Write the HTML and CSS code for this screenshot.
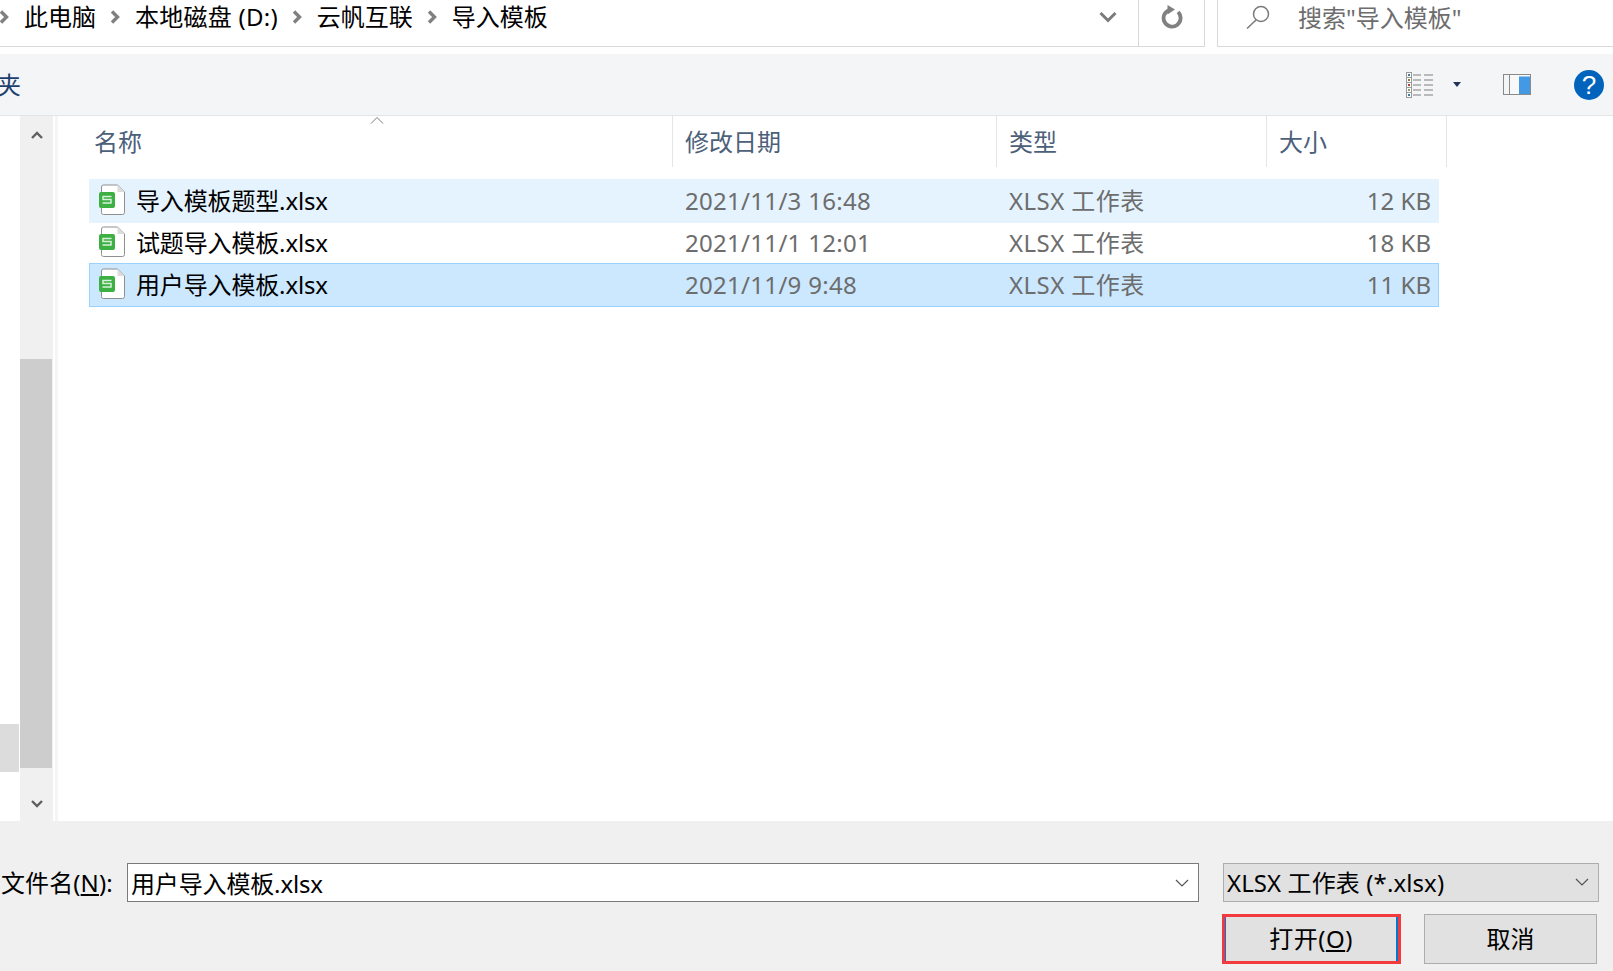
FILE: index.html
```html
<!DOCTYPE html>
<html lang="zh-CN">
<head>
<meta charset="utf-8">
<title>打开</title>
<link rel="stylesheet" href="styles.css">
</head>
<body>
<div class="window">
  <header class="topbar">
    <div class="crumbs">
      <svg class="chev chev-first" viewBox="0 0 10 14"><path d="M2 1.500 7.500 7 2 12.500"/></svg>
      <span>此电脑</span>
      <svg class="chev" viewBox="0 0 10 14"><path d="M2 1.500 7.500 7 2 12.500"/></svg>
      <span class="crumb-drive">本地磁盘 (D:)</span>
      <svg class="chev" viewBox="0 0 10 14"><path d="M2 1.500 7.500 7 2 12.500"/></svg>
      <span>云帆互联</span>
      <svg class="chev" viewBox="0 0 10 14"><path d="M2 1.500 7.500 7 2 12.500"/></svg>
      <span>导入模板</span>
      <svg class="crumb-drop" viewBox="0 0 18 12"><path d="M1.500 2 9 9.500 16.500 2"/></svg>
    </div>
    <div class="refresh">
      <svg viewBox="0 0 22 24"><path class="refresh-arc" d="M8.500 5a8.500 8.500 0 1 0 8.500 2"/><path class="refresh-head" d="M6.500 0 14 4.500 6.500 9.500z"/></svg>
    </div>
    <div class="search">
      <svg class="search-icon" viewBox="0 0 24 24"><circle cx="15" cy="9" r="7.500"/><path d="M10 15 1 23.500"/></svg>
      <span>搜索"导入模板"</span>
    </div>
  </header>

  <div class="toolbar">
    <span class="folder-label">夹</span>
    <svg class="view-icon" viewBox="0 0 27 26">
      <rect x="0.500" y="0.500" width="5" height="25" fill="#fff" stroke="#9a9a9a"/>
      <path d="M0 5.500h6M0 10.500h6M0 15.500h6M0 20.500h6" stroke="#9a9a9a"/>
      <rect x="2" y="2" width="2" height="2" fill="#3f7d9e"/>
      <rect x="2" y="7" width="2" height="2" fill="#8a7a3a"/>
      <rect x="2" y="12" width="2" height="2" fill="#c0392b"/>
      <rect x="2" y="17" width="2" height="2" fill="#8aa060"/>
      <rect x="2" y="22" width="2" height="2" fill="#3f7d9e"/>
      <path d="M7 3h8M18 3h9M7 8h8M18 8h9M7 13h8M18 13h9M7 18h8M18 18h9M7 23h8M18 23h9" stroke="#808080" stroke-width="1.200"/>
    </svg>
    <svg class="view-drop" viewBox="0 0 8 5"><path d="M0 0h8L4 5z"/></svg>
    <svg class="pane-icon" viewBox="0 0 28 21">
      <rect x="0.500" y="0.500" width="27" height="20" fill="#f8f8f8" stroke="#8a8a8a"/>
      <rect x="1" y="1" width="5.500" height="19" fill="#f4f5f7"/>
      <path d="M6.500 1v19" stroke="#8a8a8a"/>
      <rect x="16" y="2.500" width="11" height="17.500" fill="#4499e4"/>
      <path d="M22 1.500h1M24 1.500h1M26 1.500h1" stroke="#fff"/>
    </svg>
    <span class="help">?</span>
  </div>

  <main class="middle">
    <div class="nav"><div class="nav-selected"></div></div>
    <div class="scrollbar">
      <div class="scroll-btn scroll-up"><svg viewBox="0 0 12 8"><path d="M1 7 6 2l5 5"/></svg></div>
      <div class="scroll-track"><div class="scroll-thumb"></div></div>
      <div class="scroll-btn scroll-down"><svg viewBox="0 0 12 8"><path d="M1 1l5 5 5-5"/></svg></div>
    </div>
    <div class="gutter"></div>
    <section class="list">
      <svg class="sort-arrow" viewBox="0 0 14 8"><path d="M1 7.500 7 1.500l6 6"/></svg>
      <div class="list-head">
        <div class="head-cell head-name">名称</div>
        <div class="head-cell">修改日期</div>
        <div class="head-cell">类型</div>
        <div class="head-cell">大小</div>
      </div>
      <div class="rows">
        <div class="row row-hover">
          <div class="cell-name">
            <svg class="file-icon" viewBox="0 0 26 31"><path class="page" d="M2.500 3a2 2 0 0 1 2-2h14l7 7v20.500a2 2 0 0 1-2 2h-19a2 2 0 0 1-2-2z"/><path class="fold" d="M18.500 1v7h7z"/><rect class="badge" x="0" y="8" width="16" height="16" rx="2"/><path class="s" d="M12.500 12.500H4v3h8v3.500H3.500"/></svg>
            <span>导入模板题型.xlsx</span>
          </div>
          <div class="cell-dim cell-date">2021/11/3 16:48</div>
          <div class="cell-dim cell-type">XLSX 工作表</div>
          <div class="cell-dim cell-size">12 KB</div>
        </div>
        <div class="row row-plain">
          <div class="cell-name">
            <svg class="file-icon" viewBox="0 0 26 31"><path class="page" d="M2.500 3a2 2 0 0 1 2-2h14l7 7v20.500a2 2 0 0 1-2 2h-19a2 2 0 0 1-2-2z"/><path class="fold" d="M18.500 1v7h7z"/><rect class="badge" x="0" y="8" width="16" height="16" rx="2"/><path class="s" d="M12.500 12.500H4v3h8v3.500H3.500"/></svg>
            <span>试题导入模板.xlsx</span>
          </div>
          <div class="cell-dim cell-date">2021/11/1 12:01</div>
          <div class="cell-dim cell-type">XLSX 工作表</div>
          <div class="cell-dim cell-size">18 KB</div>
        </div>
        <div class="row row-selected">
          <div class="cell-name">
            <svg class="file-icon" viewBox="0 0 26 31"><path class="page" d="M2.500 3a2 2 0 0 1 2-2h14l7 7v20.500a2 2 0 0 1-2 2h-19a2 2 0 0 1-2-2z"/><path class="fold" d="M18.500 1v7h7z"/><rect class="badge" x="0" y="8" width="16" height="16" rx="2"/><path class="s" d="M12.500 12.500H4v3h8v3.500H3.500"/></svg>
            <span>用户导入模板.xlsx</span>
          </div>
          <div class="cell-dim cell-date">2021/11/9 9:48</div>
          <div class="cell-dim cell-type">XLSX 工作表</div>
          <div class="cell-dim cell-size">11 KB</div>
        </div>
      </div>
    </section>
  </main>

  <footer class="bottom">
    <div class="field-row">
      <label class="field-label">文件名(<u>N</u>):</label>
      <div class="name-input">
        <span class="input-text">用户导入模板.xlsx</span>
        <svg class="combo-chev" viewBox="0 0 14 8"><path d="M1 1l6 6 6-6"/></svg>
      </div>
      <div class="type-select">
        <span class="type-text">XLSX 工作表 (*.xlsx)</span>
        <svg class="combo-chev" viewBox="0 0 14 8"><path d="M1 1l6 6 6-6"/></svg>
      </div>
    </div>
    <div class="button-row">
      <div class="open-frame"><button class="btn btn-open">打开(<u>O</u>)</button></div>
      <button class="btn btn-cancel">取消</button>
    </div>
  </footer>
</div>
</body>
</html>
```
FILE: styles.css
```css
* { box-sizing: border-box; }
html, body { margin: 0; padding: 0; background: #fff; }
body {
  font-family: "Noto Sans", "Noto Sans CJK SC", sans-serif;
  font-size: 24px;
  color: #000;
}
svg { display: block; flex: none; }

.window {
  width: 1613px;
  height: 971px;
  display: flex;
  flex-direction: column;
  overflow: hidden;
}

/* address row */
.topbar { display: flex; height: 47px; flex: none; }
.crumbs {
  width: 1139px;
  display: flex;
  align-items: center;
  border-bottom: 1px solid #d9d9d9;
  border-right: 1px solid #d9d9d9;
  padding-bottom: 12px;
  line-height: 34px;
}
.chev { width: 10px; height: 14px; margin: 0 15px 0 14px; }
.chev-first { margin-left: -1px; }
.chev path { fill: none; stroke: #808080; stroke-width: 3.400; }
.crumb-drive { letter-spacing: 0.25px; }
.crumb-drop { width: 18px; height: 12px; margin-left: auto; margin-right: 21px; }
.crumb-drop path { fill: none; stroke: #7a7a7a; stroke-width: 3; }
.refresh {
  width: 66px;
  display: flex;
  align-items: center;
  justify-content: center;
  border-bottom: 1px solid #d9d9d9;
  border-right: 1px solid #d9d9d9;
  padding-bottom: 12px;
}
.refresh svg { width: 22px; height: 24px; }
.refresh-arc { fill: none; stroke: #808080; stroke-width: 3.800; }
.refresh-head { fill: #808080; }
.search {
  margin-left: 12px;
  flex: 1;
  display: flex;
  align-items: center;
  border-left: 1px solid #d9d9d9;
  border-bottom: 1px solid #d9d9d9;
  padding: 0 0 13px 28px;
  color: #6d6d6d;
}
.search-icon { width: 24px; height: 24px; margin-right: 28px; }
.search-icon circle, .search-icon path { fill: none; stroke: #7a7a7a; stroke-width: 1.500; }

/* command bar */
.toolbar {
  margin-top: 7px;
  height: 62px;
  flex: none;
  display: flex;
  align-items: center;
  background: #f4f5f7;
  border-bottom: 1px solid #e5e5e5;
}
.folder-label { margin-left: -3px; margin-bottom: 2px; color: #1c3f6e; }
.view-icon { width: 27px; height: 26px; margin-left: auto; }
.view-drop { width: 8px; height: 5px; margin-left: 20px; }
.view-drop path { fill: #1f3358; }
.pane-icon { width: 28px; height: 21px; margin-left: 42px; }
.help {
  width: 30px;
  height: 30px;
  margin-left: 43px;
  margin-right: 9px;
  border-radius: 50%;
  background: #0163bb;
  color: #fff;
  font-family: "Liberation Sans", sans-serif;
  font-size: 26px;
  line-height: 30px;
  text-align: center;
}

/* main area */
.middle { flex: 1; display: flex; min-height: 0; }
.nav {
  width: 20px;
  display: flex;
  flex-direction: column;
  justify-content: flex-end;
  padding-bottom: 49px;
}
.nav-selected { width: 19px; height: 48px; background: #dcdcdc; }
.scrollbar {
  width: 33px;
  display: flex;
  flex-direction: column;
  background: #f0f0f0;
}
.scroll-btn { display: flex; justify-content: center; align-items: center; flex: none; }
.scroll-btn svg { width: 12px; height: 8px; }
.scroll-btn path { fill: none; stroke: #606060; stroke-width: 2.400; }
.scroll-up { height: 38px; }
.scroll-down { height: 34px; }
.scroll-track { flex: 1; }
.scroll-thumb { width: 32px; height: 409px; margin-top: 205px; background: #cdcdcd; }
.gutter { width: 5px; background: #f5f5f5; border-left: 2px solid #fff; }

.list { flex: 1; position: relative; min-width: 0; }
.sort-arrow { position: absolute; left: 312px; top: 0; width: 14px; height: 8px; }
.sort-arrow path { fill: none; stroke: #7a7a7a; stroke-width: 1; }
.list-head {
  display: grid;
  grid-template-columns: 615px 324px 270px 180px;
  height: 51px;
  color: #4c607a;
  line-height: 34px;
}
.head-cell {
  display: flex;
  align-items: center;
  padding: 0 0 0 12px;
  border-right: 1px solid #e5e5e5;
}
.head-name { padding-left: 36px; }

.rows { margin: 12px 0 0 31px; width: 1350px; display: flex; flex-direction: column; }
.row {
  display: grid;
  grid-template-columns: 586px 324px 1fr 150px;
  align-items: center;
  padding-left: 10px;
  padding-right: 8px;
  line-height: 34px;
}
.row-hover { height: 44px; background: #e5f3ff; }
.row-plain { height: 40px; }
.row-selected { height: 44px; background: #cce8ff; border: 1px solid #99d1ff; padding-left: 9px; padding-right: 7px; }
.cell-name { display: flex; align-items: center; gap: 11px; letter-spacing: -0.15px; }
.cell-dim { color: #6d6d6d; }
.cell-date { letter-spacing: 0.3px; }
.cell-type { letter-spacing: 0.45px; }
.cell-size { text-align: right; }
.file-icon { width: 26px; height: 31px; margin-bottom: 3px; }
.page { fill: #fff; stroke: #8f8f8f; stroke-width: 1; }
.fold { fill: #dcdcdc; }
.badge { fill: #3cb043; }
.s { fill: none; stroke: #d8f0da; stroke-width: 1.500; }

/* footer */
.bottom {
  flex: none;
  height: 150px;
  padding-top: 42px;
  background: #f0f0f0;
}
.field-row { display: flex; height: 39px; }
.field-label { width: 127px; padding-left: 1px; line-height: 39px; white-space: nowrap; letter-spacing: 0.1px; }
.name-input {
  width: 1072px;
  display: flex;
  align-items: center;
  justify-content: space-between;
  background: #fff;
  border: 1px solid #7a7a7a;
  padding: 0 9px 0 3px;
}
.type-select {
  margin-left: 24px;
  width: 376px;
  display: flex;
  align-items: center;
  justify-content: space-between;
  background: #e1e1e1;
  border: 1px solid #adadad;
  padding: 0 9px 2px 3px;
}
.input-text { letter-spacing: -0.15px; }
.type-text { letter-spacing: 0.1px; }
.combo-chev { width: 14px; height: 8px; }
.combo-chev path { fill: none; stroke: #555; stroke-width: 1.200; }
.button-row { display: flex; margin: 12px 0 0 1222px; gap: 23px; }
.open-frame { width: 179px; height: 50px; border: 3px solid #f23a3f; }
.btn {
  display: block;
  font: inherit;
  color: #000;
  background: #e1e1e1;
  margin: 0;
  padding: 0 0 3px;
}
.btn-open {
  width: 100%;
  height: 100%;
  border: none;
  border-left: 1px solid #0078d7;
  border-right: 2px solid #0078d7;
  letter-spacing: 0.5px;
}
.btn-cancel { width: 173px; height: 50px; border: 1px solid #adadad; }
```
